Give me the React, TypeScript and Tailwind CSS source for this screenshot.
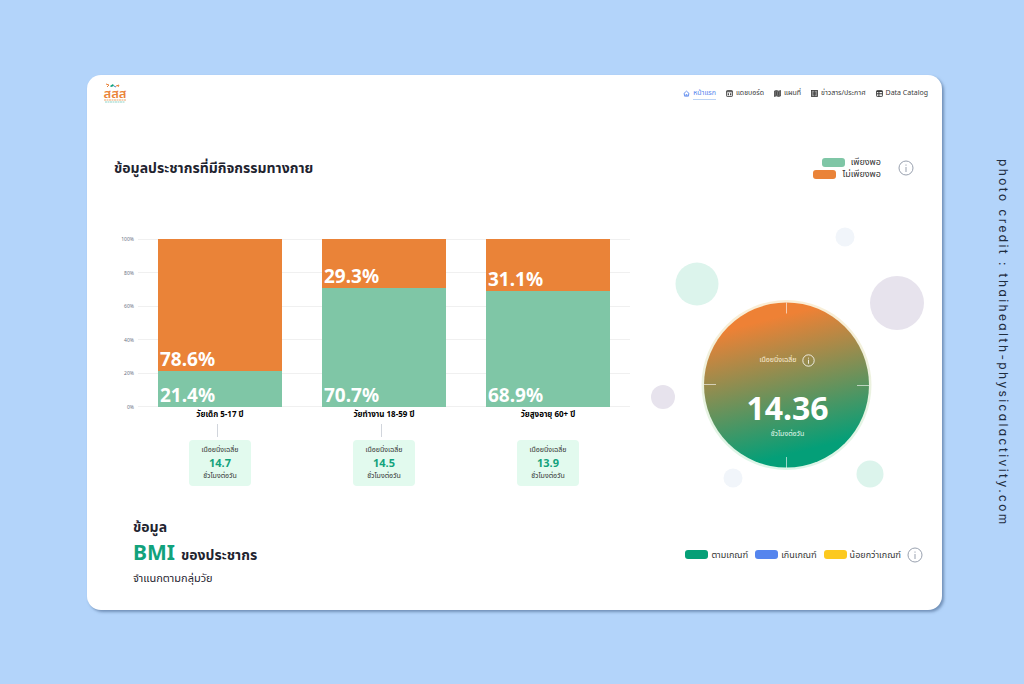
import type { ReactNode } from "react";

type AgeGroup = {
  label: string;
  enough: number;
  notEnough: number;
  hours: string;
  connector: string;
};

type LegendItem = {
  label: string;
  color: string;
};

type NavItem = {
  label: string;
  icon: ReactNode;
  active?: boolean;
};

const ageGroups: AgeGroup[] = [
  { label: "วัยเด็ก 5-17 ปี", enough: 21.4, notEnough: 78.6, hours: "14.7", connector: "bg-gray-300" },
  { label: "วัยทำงาน 18-59 ปี", enough: 70.7, notEnough: 29.3, hours: "14.5", connector: "bg-gray-300" },
  { label: "วัยสูงอายุ 60+ ปี", enough: 68.9, notEnough: 31.1, hours: "13.9", connector: "bg-transparent" },
];

const ticks = ["100%", "80%", "60%", "40%", "20%", "0%"];

const activityLegend: LegendItem[] = [
  { label: "เพียงพอ", color: "bg-[#7fc6a6]" },
  { label: "ไม่เพียงพอ", color: "bg-[#ea8338]" },
];

const bmiLegend: LegendItem[] = [
  { label: "ตามเกณฑ์", color: "bg-[#059f77]" },
  { label: "เกินเกณฑ์", color: "bg-[#5585ee]" },
  { label: "น้อยกว่าเกณฑ์", color: "bg-[#fcc91f]" },
];

const navItems: NavItem[] = [
  {
    label: "หน้าแรก",
    active: true,
    icon: <path d="M1 6.500 6 2l5 4.500M2.500 6v4.500h7V6M5 10.500V8h2v2.500" fill="none" stroke="currentColor" strokeWidth="1.400" />,
  },
  {
    label: "แดชบอร์ด",
    icon: (
      <>
        <rect x="1" y="1" width="10" height="10" rx="1" fill="none" stroke="currentColor" strokeWidth="1.500" />
        <path d="M1 2h10v2H1zM3 5.500h2V9H3zM7 5.500h2V9H7z" fill="currentColor" />
      </>
    ),
  },
  {
    label: "แผนที่",
    icon: <path d="M0.500 2 4 1l4 1 3.500-1v9L8 11l-4-1-3.500 1zM4 2.500v6M8 3.500v6" fill="#777" stroke="currentColor" strokeWidth="1.400" />,
  },
  {
    label: "ข่าวสาร/ประกาศ",
    icon: (
      <>
        <rect x="1" y="1" width="10" height="10" fill="#999" stroke="currentColor" strokeWidth="1.400" />
        <path d="M3 4h6M3 6h6M3 8h6M6 1v10" stroke="currentColor" />
      </>
    ),
  },
  {
    label: "Data Catalog",
    icon: (
      <>
        <rect x="1" y="1" width="10" height="10" rx="1" fill="none" stroke="currentColor" strokeWidth="1.600" />
        <path d="M1 2.500h10M1 6.500h10M5 2v9" stroke="currentColor" strokeWidth="1.800" />
      </>
    ),
  },
];

const bubbles = [
  { cx: 67, cy: 64, r: 21.5, fill: "#dcf4ec" },
  { cx: 267, cy: 83, r: 27, fill: "#e7e3ed" },
  { cx: 215, cy: 17, r: 9.5, fill: "#f1f5fa" },
  { cx: 33, cy: 177, r: 12, fill: "#e7e3ed" },
  { cx: 103, cy: 258, r: 9.5, fill: "#f1f5fa" },
  { cx: 240, cy: 254, r: 13.5, fill: "#dcf4ec" },
];

function InfoButton({ className }: { className: string }) {
  return (
    <button type="button" aria-label="info" className={className}>
      <svg viewBox="0 0 16 16" className="size-full" fill="none" stroke="currentColor">
        <circle cx="8" cy="8" r="7" />
        <path d="M8 7v5M8 4.500v1.200" />
      </svg>
    </button>
  );
}

function Logo() {
  return (
    <svg viewBox="0 0 24 22" className="h-[22px] w-6" role="img" aria-label="สสส">
      <path d="m3 2 3 1-2 2M13 4l3-1-1 2" stroke="#ea8338" fill="none" />
      <path d="m7 4 3-2 1 2-3 1z" fill="#0fa07c" />
      <path d="m11 4 2 1" stroke="#4a7fc1" />
      <text x="12" y="16" textAnchor="middle" fontSize="13" fontWeight="600" fill="#ea8338">
        สสส
      </text>
      <path d="M1 18h22" stroke="#eba66f" strokeWidth="1" strokeDasharray="2 0.5" />
      <path d="M2 20h20" stroke="#8fd3c8" strokeWidth="1" strokeDasharray="2 0.5" />
    </svg>
  );
}

function Header() {
  return (
    <header className="flex h-9 items-center justify-between pr-[14px] pl-4">
      <a href="#home">
        <Logo />
      </a>
      <nav className="flex items-center gap-[10px] text-[7px] leading-[12px] text-[#3a3a3a]">
        {navItems.map((item) => (
          <a
            key={item.label}
            href="#home"
            className={`flex items-center gap-[3px] ${item.active ? "text-[#5585ee]" : ""}`}
          >
            <svg viewBox="0 0 12 12" className="size-[7px]">
              {item.icon}
            </svg>
            <span className={item.active ? "border-b border-[#bcd4f5]" : "border-b border-transparent"}>
              {item.label}
            </span>
          </a>
        ))}
      </nav>
    </header>
  );
}

function ActivityChart() {
  return (
    <div className="flex-1 pt-[55px] pl-[27px]">
      <div className="flex">
        <div className="-my-1 flex w-6 flex-col justify-between pr-1 text-right text-[5px] leading-[8px] text-gray-500">
          {ticks.map((tick) => (
            <span key={tick}>{tick}</span>
          ))}
        </div>
        <div className="relative h-[168px] flex-1">
          <div className="absolute inset-0 flex flex-col justify-between">
            {ticks.map((tick) => (
              <div key={tick} className="h-px bg-[#f0f0f0]" />
            ))}
          </div>
          <div className="relative grid h-full grid-cols-3">
            {ageGroups.map((group) => (
              <div key={group.label} className="flex flex-col px-5 text-[19px] leading-[24px] font-bold text-white">
                <div
                  className="flex items-end bg-[#ea8338] pl-[2px]"
                  style={{ height: `${group.notEnough}%` }}
                >
                  {group.notEnough}%
                </div>
                <div className="flex flex-1 items-end bg-[#7fc6a6] pl-[2px]">{group.enough}%</div>
              </div>
            ))}
          </div>
        </div>
      </div>

      <div className="grid grid-cols-3 pl-6">
        {ageGroups.map((group) => (
          <div key={group.label} className="flex flex-col items-center">
            <p className="text-[8px] leading-[14px] font-bold text-black">{group.label}</p>
            <div className={`my-[3px] mr-[6px] h-[13px] w-px ${group.connector}`} />
            <div className="flex h-[46px] w-[62px] flex-col items-center justify-center rounded bg-[#e2faee] pb-[2px] text-[7px] leading-[13px] text-[#333]">
              <span>เนือยนิ่งเฉลี่ย</span>
              <span className="text-[11px] font-bold text-[#12a27c]">{group.hours}</span>
              <span>ชั่วโมงต่อวัน</span>
            </div>
          </div>
        ))}
      </div>
    </div>
  );
}

function SedentaryDial() {
  return (
    <div className="relative mt-9 h-[280px] w-[312px]">
      <svg viewBox="0 0 312 280" className="absolute inset-0 size-full" aria-hidden="true">
        <defs>
          <linearGradient id="dial" x1="0.4" y1="0.1" x2="0.6" y2="0.9">
            <stop offset="0" stopColor="#ee8135" />
            <stop offset="1" stopColor="#049f78" />
          </linearGradient>
          <linearGradient id="ring" x1="0" y1="0" x2="0" y2="1">
            <stop offset="0" stopColor="#fbeed6" />
            <stop offset="1" stopColor="#dcf6e9" />
          </linearGradient>
        </defs>
        {bubbles.map((bubble) => (
          <circle key={`${bubble.cx}-${bubble.cy}`} {...bubble} />
        ))}
        <circle cx="156.500" cy="165" r="85" fill="url(#ring)" />
        <circle cx="156.500" cy="165" r="82.500" fill="url(#dial)" />
        <path
          d="M156.500 82.500v11M156.500 237v11M74 164.500h12M227 165.500h12"
          stroke="#fff"
          strokeOpacity="0.6"
        />
      </svg>
      <div className="relative flex h-full flex-col items-center pt-[133px] pl-[3px] text-white">
        <div className="flex items-center gap-[6px] text-[7px] leading-[14px] text-[#fbeed6]">
          เนือยนิ่งเฉลี่ย
          <InfoButton className="size-[13px] text-white" />
        </div>
        <p className="mt-5 text-[32px] leading-[42px] font-bold">14.36</p>
        <p className="text-[7px] leading-[10px] text-[#e2faee]">ชั่วโมงต่อวัน</p>
      </div>
    </div>
  );
}

function ActivitySection() {
  return (
    <section>
      <div className="mt-[41px] flex h-8 items-center justify-between pr-7 pl-[27px]">
        <h1 className="text-[14px] leading-[20px] font-bold text-[#1f2430]">
          ข้อมูลประชากรที่มีกิจกรรมทางกาย
        </h1>
        <div className="flex items-center gap-[17px]">
          <ul className="flex flex-col items-end text-[9px] leading-[12px] text-[#333]">
            {activityLegend.map((item) => (
              <li key={item.label} className="flex items-center gap-[6px]">
                <span className={`h-[9px] w-[23px] rounded-[3px] ${item.color}`} />
                {item.label}
              </li>
            ))}
          </ul>
          <InfoButton className="size-4 text-gray-400" />
        </div>
      </div>
      <div className="flex">
        <ActivityChart />
        <SedentaryDial />
      </div>
    </section>
  );
}

function BmiSection() {
  return (
    <section className="flex items-center justify-between pt-[17px] pr-[19px] pb-6 pl-[46px] text-[#1f2430]">
      <div>
        <h2 className="text-[14px] font-bold">
          <span className="block leading-[20px]">ข้อมูล</span>
          <span className="flex items-baseline gap-[6px] leading-[30px]">
            <span className="text-[21px] text-[#12a27c]">BMI</span>
            ของประชากร
          </span>
        </h2>
        <p className="text-[11px] leading-[16px]">จำแนกตามกลุ่มวัย</p>
      </div>
      <div className="flex items-center gap-[6px] pt-[6px] text-[9px] leading-[12px] text-[#333]">
        <ul className="flex items-center gap-[7px]">
          {bmiLegend.map((item) => (
            <li key={item.label} className="flex items-center gap-[3px]">
              <span className={`h-[9px] w-[23px] rounded-[3px] ${item.color}`} />
              {item.label}
            </li>
          ))}
        </ul>
        <InfoButton className="size-4 text-gray-400" />
      </div>
    </section>
  );
}

export default function App() {
  return (
    <div className="flex min-h-screen items-start bg-[#b3d4fa] pt-[75px] pb-[74px] pl-[87px] font-['Noto_Sans','Noto_Sans_Thai',sans-serif]">
      <main className="flex-1 rounded-[14px] bg-white shadow-[2px_2px_3px_rgba(70,100,140,0.6)]">
        <Header />
        <ActivitySection />
        <BmiSection />
      </main>
      <aside className="flex w-[82px] justify-end self-center pr-[11px] font-['Inter',sans-serif]">
        <p className="text-[12px] leading-[20px] tracking-[0.2em] whitespace-nowrap text-[#1f2d3f] [font-feature-settings:'cv11'] [writing-mode:vertical-rl]">
          photo credit : thaihealth-physicalactivity.com
        </p>
      </aside>
    </div>
  );
}
